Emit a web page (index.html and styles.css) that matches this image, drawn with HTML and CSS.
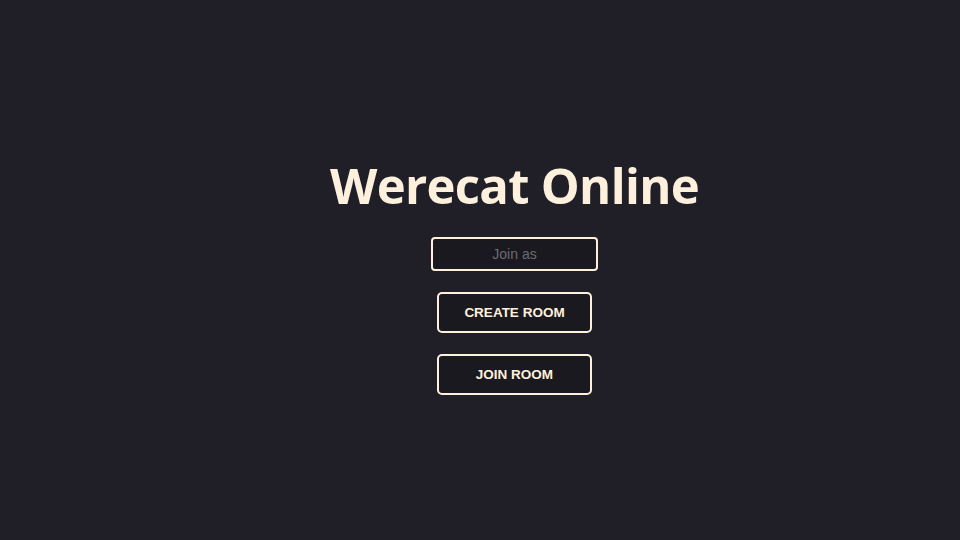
FILE: index.html
```html
<!DOCTYPE html>
<html>
<head>
<meta charset="utf-8">
<link rel="stylesheet" href="styles.css">
</head>
<body>
<main class="page">
  <div class="panel">
    <h1 class="title">Werecat Online</h1>
    <input class="name-input" type="text" placeholder="Join as">
    <button class="btn">CREATE ROOM</button>
    <button class="btn">JOIN ROOM</button>
  </div>
</main>
</body>
</html>
```
FILE: styles.css
```css
html, body {
  margin: 0;
  padding: 0;
  height: 100%;
  background: #201f28;
}
.page {
  height: 100%;
  display: flex;
  justify-content: center;
  padding-left: 69px;
  box-sizing: border-box;
}
.panel {
  display: flex;
  flex-direction: column;
  align-items: center;
  padding-top: 151px;
}
.title {
  margin: 0;
  font-family: "Open Sans", sans-serif;
  font-weight: 700;
  font-size: 49px;
  line-height: 68px;
  color: #fdf0dc;
  letter-spacing: -0.7px;
}
.name-input {
  margin-top: 18px;
  width: 167px;
  height: 34px;
  box-sizing: border-box;
  border: 2px solid #fdf0dc;
  border-radius: 4px;
  background: #1a1920;
  color: #fdf0dc;
  font-family: "Liberation Sans", Arial, sans-serif;
  font-size: 14px;
  text-align: center;
  outline: none;
}
.name-input::placeholder {
  color: #6b6a70;
}
.btn {
  margin-top: 21px;
  width: 155px;
  height: 41px;
  box-sizing: border-box;
  border: 2px solid #fdf0dc;
  border-radius: 5px;
  background: #1a1920;
  color: #fdf0dc;
  font-family: "Liberation Sans", Arial, sans-serif;
  font-weight: 700;
  font-size: 13.5px;
  padding-bottom: 2px;
  cursor: pointer;
}
```
